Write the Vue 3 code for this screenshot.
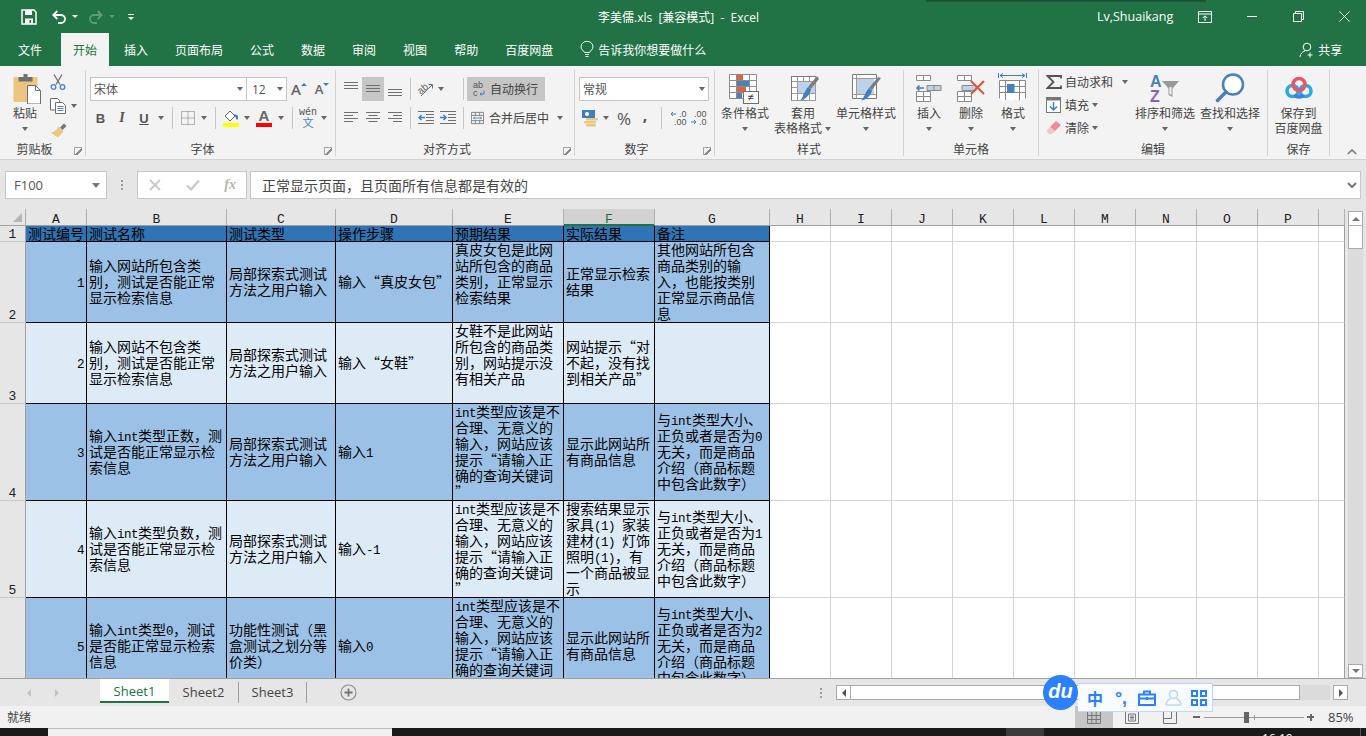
<script setup>
const colLetters = ['A','B','C','D','E','F','G','H','I','J','K','L','M','N','O','P','']
const warn = 'int类型应该是不\n合理、无意义的\n输入，网站应该\n提示“请输入正\n确的查询关键词\n”'
const note = n => `与int类型大小、\n正负或者是否为${n}\n无关，而是商品\n介绍（商品标题\n中包含此数字）`
const method = '局部探索式测试\n方法之用户输入'
const rows = [
  { n: 1, cls: 'head', cells: ['测试编号','测试名称','测试类型','操作步骤','预期结果','实际结果','备注'] },
  { n: 2, cls: 'dark', cells: ['1','输入网站所包含类\n别，测试是否能正常\n显示检索信息',method,'输入“真皮女包”','真皮女包是此网\n站所包含的商品\n类别，正常显示\n检索结果','正常显示检索\n结果','其他网站所包含\n商品类别的输\n入，也能按类别\n正常显示商品信\n息'] },
  { n: 3, cls: 'light', cells: ['2','输入网站不包含类\n别，测试是否能正常\n显示检索信息',method,'输入“女鞋”','女鞋不是此网站\n所包含的商品类\n别，网站提示没\n有相关产品','网站提示“对\n不起，没有找\n到相关产品”',''] },
  { n: 4, cls: 'dark', cells: ['3','输入int类型正数，测\n试是否能正常显示检\n索信息',method,'输入1',warn,'显示此网站所\n有商品信息',note(0)] },
  { n: 5, cls: 'light', cells: ['4','输入int类型负数，测\n试是否能正常显示检\n索信息',method,'输入-1',warn,'搜索结果显示\n家具(1) 家装\n建材(1) 灯饰\n照明(1)，有\n一个商品被显\n示',note(1)] },
  { n: 6, cls: 'dark', cells: ['5','输入int类型0，测试\n是否能正常显示检索\n信息','功能性测试（黑\n盒测试之划分等\n价类）','输入0',warn,'显示此网站所\n有商品信息',note(2)] },
]
const blanks = 10
const docTitle = '李美儒.xls  [兼容模式]  -  Excel'
const segs = text => (text.match(/[A-Za-z0-9\-() ]+|[^A-Za-z0-9\-() ]+/g) || []).map(t => ({ t, lat: /^[A-Za-z0-9\-() ]/.test(t) }))
const isTop = (r, i) => i === 4 || (r.n === 5 && i === 5)
const tabs = ['插入','页面布局','公式','数据','审阅','视图','帮助','百度网盘']
</script>

<template>
  <div class="app">
    <header class="titlebar">
      <div class="qat">
        <svg class="q-save" width="16" height="16" viewBox="0 0 16 16"><path d="M1 1h12l2 2v12H1z" fill="none" stroke="#fff" stroke-width="1.5"/><rect x="4" y="1" width="7" height="5" fill="#fff"/><rect x="4" y="9.5" width="8" height="5.5" fill="#fff"/><rect x="8.5" y="11" width="1.6" height="3" fill="#217346"/></svg>
        <svg class="q-undo" width="16" height="16" viewBox="0 0 16 16"><path d="M2.5 6H10a3.8 3.8 0 0 1 0 8H7M6.3 2L2.3 6l4 4" fill="none" stroke="#fff" stroke-width="1.8"/></svg>
        <i class="caret white"></i>
        <svg class="q-redo" width="16" height="16" viewBox="0 0 16 16"><path d="M13.5 6H6a3.8 3.8 0 0 0 0 8h3M9.7 2l4 4-4 4" fill="none" stroke="#5f9c7e" stroke-width="1.8"/></svg>
        <i class="caret dim"></i>
        <span class="q-more"><b></b><i class="caret white"></i></span>
      </div>
      <div class="doc">{{ docTitle }}</div>
      <div class="user">Lv,Shuaikang</div>
      <svg class="w-disp" width="14" height="12" viewBox="0 0 14 12"><path d="M.5.5h13v11H.5zM.5 3h13M7 10V5M4.8 7L7 4.8 9.2 7" fill="none" stroke="#fff"/></svg>
      <svg class="w-min" width="11" height="11" viewBox="0 0 11 11"><path d="M0 5.5h10" stroke="#fff"/></svg>
      <svg class="w-res" width="11" height="11" viewBox="0 0 11 11"><path d="M.5 2.5h8v8h-8zM2.5 2.5v-2h8v8h-2" fill="none" stroke="#fff"/></svg>
      <svg class="w-close" width="11" height="11" viewBox="0 0 11 11"><path d="M.5.5l10 10M10.5.5l-10 10" stroke="#fff"/></svg>
      <div class="shadow"></div>
    </header>

    <nav class="tabs">
      <span class="tab file">文件</span>
      <span class="tab active">开始</span>
      <span v-for="t in tabs" :key="t" class="tab">{{ t }}</span>
      <svg class="bulb" width="14" height="17" viewBox="0 0 14 17"><path d="M4.5 11.5C3.5 9.5 1 8.500 1 5.800A5.800 5.300 0 0 1 13 5.800c0 2.700-2.500 3.700-3.500 5.700zM5 13.500h4M5.500 15.500h3" fill="none" stroke="#fff"/></svg>
      <span class="tell">告诉我你想要做什么</span>
      <svg class="share-ic" width="16" height="16" viewBox="0 0 16 16"><circle cx="8" cy="5" r="3.800" fill="none" stroke="#fff"/><path d="M1 15c.5-3.500 2.500-5.500 5-6M11 10.500v5M8.500 13h5" fill="none" stroke="#fff"/></svg>
      <span class="share">共享</span>
    </nav>

    <section class="ribbon">
      <!-- 剪贴板 -->
      <div class="group g-clip has-launch">
        <div class="content clip">
          <div class="big b-paste">
            <div class="ic">
              <svg width="30" height="32" viewBox="0 0 30 32"><rect x="1.500" y="5" width="24" height="25" rx="1" fill="#ecc67f"/><path d="M6.500 9.500V5h5V2h4v3h5v4.500z" fill="#6f6f6f"/><path d="M15.500 13.500h8l5 5v13.500h-13z" fill="#fff" stroke="#6f6f6f"/><path d="M23.500 13.500v5h5" fill="none" stroke="#6f6f6f"/></svg>
            </div>
            <span>粘贴</span>
            <i class="caret cl"></i>
          </div>
          <div class="clip-tools">
            <div class="ct">
              <svg width="16" height="16" viewBox="0 0 16 16"><path d="M4 .5l6 10M12 .5l-6 10" stroke="#6f6f6f" stroke-width="1.300" fill="none"/><circle cx="3.500" cy="13" r="2.300" fill="none" stroke="#4b82bd" stroke-width="1.300"/><circle cx="12.500" cy="13" r="2.300" fill="none" stroke="#4b82bd" stroke-width="1.300"/></svg>
            </div>
            <div class="ct">
              <svg width="16" height="16" viewBox="0 0 16 16"><path d="M.5.5h7l2 2V12H.5z" fill="#fff" stroke="#6f6f6f"/><path d="M5.500 4.500h7l3 3v8h-10z" fill="#fff" stroke="#6f6f6f"/><path d="M7.500 8.500h6M7.500 10.500h6M7.500 12.500h6" stroke="#4b82bd"/></svg>
              <i class="caret cc"></i>
            </div>
            <div class="ct">
              <svg width="17" height="15" viewBox="0 0 17 15"><path d="M10 4.500l4-4 2.500 2.500-4 4z" fill="#777"/><path d="M8.500 3.500l5 5-5.500 6-7.500-5c3 0 6-2 8-6z" fill="#ecc67f"/></svg>
            </div>
          </div>
        </div>
        <div class="label">剪贴板</div><i class="launch"></i>
      </div>

      <!-- 字体 -->
      <div class="group g-font has-launch">
        <div class="content rows">
          <div class="font-r1">
            <div class="combo"><span>宋体</span><i class="caret"></i></div>
            <div class="combo"><span>12</span><i class="caret"></i></div>
            <span class="cell-c aa"><span class="aa-t">A</span><i class="tri-up"></i></span>
            <span class="cell-c aa small"><span class="aa-t">A</span><i class="tri-dn"></i></span>
          </div>
          <div class="font-r2">
            <span class="cell-c fb">B</span>
            <span class="cell-c fi">I</span>
            <span class="cell-c fu">U</span>
            <span class="cell-c"><i class="caret"></i></span>
            <span class="cell-c"><i class="sep"></i></span>
            <span class="cell-c"><svg width="14" height="14" viewBox="0 0 14 14"><path d="M.5.500h13v13H.5zM7 .5v13M.5 7h13" fill="none" stroke="#777" stroke-dasharray="1 1"/></svg></span>
            <span class="cell-c"><i class="caret"></i></span>
            <span class="cell-c"><i class="sep"></i></span>
            <span class="cell-c"><svg width="18" height="18" viewBox="0 0 18 18"><path d="M3 7l5-5 5 5-5 5z" fill="#fff" stroke="#666"/><path d="M12 5l4 1.500 0 4-1.500 0z" fill="#4b82bd"/><rect x="1" y="14" width="16" height="4" fill="#ff0"/></svg></span>
            <span class="cell-c"><i class="caret"></i></span>
            <span class="cell-c fa"><span>A</span><i class="bar-red"></i></span>
            <span class="cell-c"><i class="caret"></i></span>
            <span class="cell-c"><i class="sep"></i></span>
            <span class="cell-c wen"><small>wén</small><em>文</em></span>
            <span class="cell-c"><i class="caret"></i></span>
          </div>
        </div>
        <div class="label">字体</div><i class="launch"></i>
      </div>

      <!-- 对齐方式 -->
      <div class="group g-align has-launch">
        <div class="content rows">
          <div class="al-r1">
            <span class="cell-c"><svg width="15" height="16" viewBox="0 0 15 16"><path d="M0 1.500h14M0 4.500h14M0 7.500h14" stroke="#6f6f6f"/></svg></span>
            <span class="cell-c on"><svg width="15" height="16" viewBox="0 0 15 16"><path d="M0 4.500h14M0 7.500h14M0 10.500h14" stroke="#6f6f6f"/></svg></span>
            <span class="cell-c"><svg width="15" height="16" viewBox="0 0 15 16"><path d="M0 8.500h14M0 11.500h14M0 14.500h14" stroke="#6f6f6f"/></svg></span>
            <span class="cell-c"><i class="sep"></i></span>
            <span class="cell-c"><svg width="16" height="16" viewBox="0 0 16 16"><text x="1" y="11" class="ori" transform="rotate(-40 6 9)">ab</text><path d="M4 15L15 4M11.500 3.500h4v4" fill="none" stroke="#6f6f6f"/></svg></span>
            <span class="cell-c"><i class="caret"></i></span>
            <span></span>
            <span class="cell-c"><i class="sep"></i></span>
            <div class="wrap-btn">
              <svg width="13" height="16" viewBox="0 0 13 16"><text x="0" y="7" class="abc">ab</text><text x="0" y="15" class="abc">c</text><path d="M11 9.500V13H7M8.500 11.500L7 13l1.500 1.500" fill="none" stroke="#3f7fc1"/></svg>
              <span>自动换行</span>
            </div>
          </div>
          <div class="al-r2">
            <span class="cell-c"><svg width="15" height="12" viewBox="0 0 15 12"><path d="M0 .5h14M0 3.500h9M0 6.500h14M0 9.500h9" stroke="#6f6f6f"/></svg></span>
            <span class="cell-c"><svg width="15" height="12" viewBox="0 0 15 12"><path d="M0 .5h14M2.500 3.500h9M0 6.500h14M2.500 9.500h9" stroke="#6f6f6f"/></svg></span>
            <span class="cell-c"><svg width="15" height="12" viewBox="0 0 15 12"><path d="M0 .5h14M5 3.500h9M0 6.500h14M5 9.500h9" stroke="#6f6f6f"/></svg></span>
            <span class="cell-c"><i class="sep"></i></span>
            <span class="cell-c"><svg width="16" height="14" viewBox="0 0 16 14"><path d="M0 .5h16M8 3.500h8M8 6.500h8M8 9.500h8M0 12.500h16" stroke="#6f6f6f"/><path d="M7 6.500H1M3.500 4L1 6.500 3.500 9" fill="none" stroke="#3f7fc1" stroke-width="1.500"/></svg></span>
            <span class="cell-c"><svg width="16" height="14" viewBox="0 0 16 14"><path d="M0 .5h16M8 3.500h8M8 6.500h8M8 9.500h8M0 12.500h16" stroke="#6f6f6f"/><path d="M0 6.500h6M3.500 4L6 6.500 3.500 9" fill="none" stroke="#3f7fc1" stroke-width="1.500"/></svg></span>
            <span class="cell-c"><i class="sep"></i></span>
            <div class="merge">
              <svg width="15" height="14" viewBox="0 0 15 14"><path d="M.5.5h14v13H.5zM.5 4h14M.5 10h14M5 .5V4M10 .5V4M5 10v3.500M10 10v3.500" fill="none" stroke="#777"/><path d="M2.500 7h10M4.500 5.500L3 7l1.500 1.500M10.500 5.500L12 7l-1.500 1.500" fill="none" stroke="#3f7fc1"/></svg>
              <span>合并后居中</span>
              <i class="caret cm"></i>
            </div>
          </div>
        </div>
        <div class="label">对齐方式</div><i class="launch"></i>
      </div>

      <!-- 数字 -->
      <div class="group g-num has-launch">
        <div class="content rows">
          <div class="num-r1"><div class="combo"><span>常规</span><i class="caret"></i></div></div>
          <div class="num-r2">
            <span class="cell-c"><svg width="17" height="18" viewBox="0 0 17 18"><rect x="0" y="1" width="13" height="8" fill="#3f7fc1"/><circle cx="5" cy="5" r="2" fill="#fff"/><rect x="4" y="9" width="12" height="2.500" rx="1" fill="#ecc67f"/><rect x="2" y="12" width="12" height="2.500" rx="1" fill="#ecc67f"/><rect x="4" y="15" width="10" height="2.500" rx="1" fill="#ecc67f"/></svg></span>
            <span class="cell-c"><i class="caret"></i></span>
            <span class="cell-c pct">%</span>
            <span class="cell-c comma">,</span>
            <span class="cell-c"><i class="sep"></i></span>
            <span class="cell-c dec"><svg width="16" height="16" viewBox="0 0 16 16"><path d="M0 4h5M2 2L0 4l2 2" fill="none" stroke="#3f7fc1"/><text x="8" y="7" class="d">.0</text><text x="3" y="15" class="d">.00</text></svg></span>
            <span class="cell-c dec"><svg width="16" height="16" viewBox="0 0 16 16"><text x="3" y="7" class="d">.00</text><path d="M0 12h5M3 10l2 2-2 2" fill="none" stroke="#3f7fc1"/><text x="8" y="15" class="d">.0</text></svg></span>
          </div>
        </div>
        <div class="label">数字</div><i class="launch"></i>
      </div>

      <!-- 样式 -->
      <div class="group g-style">
        <div class="content flexrow">
          <div class="big b-cond">
            <div class="ic">
              <svg width="32" height="32" viewBox="0 0 32 32"><path d="M.5 2.500h27v24H.500zM.5 8.500h27M.5 14.500h27M.5 20.500h27M7.500 2.500v24M20.500 2.500v24" fill="#fff" stroke="#8c8c8c"/><rect x="8" y="3" width="6" height="5" fill="#e0623e"/><rect x="8" y="9" width="12" height="5" fill="#4a81ba"/><rect x="8" y="15" width="9" height="5" fill="#e0623e"/><rect x="8" y="21" width="5" height="5" fill="#4a81ba"/><rect x="14.500" y="19.500" width="15" height="12" fill="#fff" stroke="#6f6f6f"/><text x="18.500" y="29" class="ne">≠</text></svg>
            </div>
            <span>条件格式</span>
            <i class="caret cl"></i>
          </div>
          <div class="big b-table">
            <div class="ic">
              <svg width="32" height="32" viewBox="-3 0 32 32"><path d="M1.500 4.500h24v24h-24zM1.500 9.500h24M1.500 15.500h24M1.500 21.500h24M7.500 4.500v24M13.500 4.500v24M19.500 4.500v24" fill="#fff" stroke="#9b9b9b"/><rect x="8" y="10" width="17" height="11" fill="#bdd2e9"/><path d="M1.500 4.500h24M1.500 4.500v24" stroke="#7a7a7a" fill="none"/><path d="M29 7l-8 10-3-2 9-11z" fill="#7d7d7d"/><path d="M18 15l3 2.500c-1 5-5 10-11 11 3-2 4-9 8-13.500z" fill="#3f7fc1"/></svg>
            </div>
            <span>套用</span>
            <span class="inl">表格格式<i class="caret ci"></i></span>
          </div>
          <div class="big b-cstyle">
            <div class="ic">
              <svg width="32" height="32" viewBox="0 0 32 32"><path d="M2.500 2.500h24v24h-24z" fill="#fff" stroke="#7a7a7a"/><rect x="7" y="7" width="17" height="15" fill="#bdd2e9"/><path d="M6.500 2.500v24M2.500 6.500h24M2.500 22.500h24" stroke="#9b9b9b" fill="none"/><path d="M31 6l-9 12-3-2 9-11z" fill="#7d7d7d"/><path d="M19 16l3 2.500c-1 5-5 9-11 10 3-2 4-8 8-12.500z" fill="#3f7fc1"/></svg>
            </div>
            <span>单元格样式</span>
            <i class="caret cl"></i>
          </div>
        </div>
        <div class="label">样式</div>
      </div>

      <!-- 单元格 -->
      <div class="group g-cells">
        <div class="content flexrow">
          <div class="big b-c">
            <div class="ic">
              <svg width="28" height="30" viewBox="0 0 28 30"><path d="M1.500 2.500h14v5h-14zM8.500 2.500v5M1.500 18.500h14v10h-14zM1.500 23.500h14M8.500 18.500v10" fill="#fff" stroke="#8a8a8a"/><path d="M12 12.500h14v5H12zM19 12.500v5" fill="#bdd2e9" stroke="#8a8a8a"/><path d="M9 15H2M4.500 12.500L2 15l2.500 2.500" fill="none" stroke="#3f7fc1" stroke-width="1.500"/></svg>
            </div>
            <span>插入</span>
            <i class="caret cl"></i>
          </div>
          <div class="big b-c">
            <div class="ic">
              <svg width="30" height="30" viewBox="0 0 30 30"><path d="M1.500 2.500h14v5h-14zM8.500 2.500v5M1.500 18.500h14v10h-14zM1.500 23.500h14M8.500 18.500v10" fill="#fff" stroke="#8a8a8a"/><path d="M6 12.500h14v5H6z" fill="#bdd2e9" stroke="#8a8a8a"/><path d="M15 8l13 13M28 8L15 21" stroke="#d9583a" stroke-width="2"/></svg>
            </div>
            <span>删除</span>
            <i class="caret cl"></i>
          </div>
          <div class="big b-c">
            <div class="ic">
              <svg width="30" height="32" viewBox="0 0 30 32"><path d="M.5 1v5M28.500 1v5M2 3.500h25M5 1.500L2 3.500l3 2M24 1.500l3 2-3 2" fill="none" stroke="#3f7fc1"/><path d="M1.500 8.500h26v21h-26zM1.500 14.500h26M1.500 20.500h26M7.500 8.500v21M21.500 8.500v21" fill="#fff" stroke="#8a8a8a"/><rect x="9" y="12" width="7.500" height="9" fill="#4a81ba"/><path d="M1 26c3 3 6 3 8 1 2 2 6 2 8 0 2 2 7 2 11-1v6H1z" fill="#f3f3f3"/></svg>
            </div>
            <span>格式</span>
            <i class="caret cl"></i>
          </div>
        </div>
        <div class="label">单元格</div>
      </div>

      <!-- 编辑 -->
      <div class="group g-edit">
        <div class="content flexrow">
          <div class="edit-col">
            <div class="er">
              <span class="er-ic"><svg width="16" height="14" viewBox="0 0 16 14"><path d="M15 3.500V1H1.500l6 6-6 6H15v-2.500" fill="none" stroke="#555" stroke-width="1.800"/></svg></span>
              <span>自动求和</span><i class="caret c1"></i>
            </div>
            <div class="er">
              <span class="er-ic"><svg width="15" height="16" viewBox="0 0 15 16"><rect x=".5" y=".5" width="14" height="15" fill="#fff" stroke="#777"/><rect x=".5" y=".5" width="14" height="3" fill="#777"/><path d="M7.500 5v8M4 9.500L7.500 13 11 9.500" fill="none" stroke="#3f7fc1" stroke-width="1.500"/></svg></span>
              <span>填充</span><i class="caret c2"></i>
            </div>
            <div class="er">
              <span class="er-ic"><svg width="16" height="15" viewBox="0 0 16 15"><path d="M10 1l5 4-6 6-5-4z" fill="#ee8a9b"/><path d="M4 7l5 4-3 3H3L0.500 11z" fill="#f5c2cb"/></svg></span>
              <span>清除</span><i class="caret c2"></i>
            </div>
          </div>
          <div class="big b-sort">
            <div class="ic">
              <svg width="32" height="32" viewBox="0 0 32 32"><text x="1" y="15" class="az a">A</text><text x="1" y="30" class="az z">Z</text><path d="M13 9h17l-6.500 7.500V25l-4-2v-6.500z" fill="#9a9a9a"/><path d="M20.500 15v7l2 1v-8" fill="#f3f3f3"/></svg>
            </div>
            <span>排序和筛选</span>
            <i class="caret cl"></i>
          </div>
          <div class="big b-find">
            <div class="ic">
              <svg width="32" height="32" viewBox="0 0 32 32"><circle cx="19" cy="12.500" r="10" fill="#fff" stroke="#4a81ba" stroke-width="2.500"/><path d="M12 20L3.500 28.500" stroke="#4a81ba" stroke-width="3.500" stroke-linecap="round"/></svg>
            </div>
            <span>查找和选择</span>
            <i class="caret cl"></i>
          </div>
        </div>
        <div class="label">编辑</div>
      </div>

      <!-- 保存 -->
      <div class="group g-save">
        <div class="content flexrow">
          <div class="big b-bd">
            <div class="ic">
              <svg width="28" height="26" viewBox="0 0 28 26"><circle cx="7.500" cy="16" r="5.500" fill="none" stroke="#29a9e8" stroke-width="3.500"/><circle cx="20.500" cy="16" r="5.500" fill="none" stroke="#29a9e8" stroke-width="3.500"/><circle cx="14" cy="9.500" r="6" fill="none" stroke="#ef5365" stroke-width="3.500"/><path d="M9.500 20a6 6 0 0 0 9 0" fill="none" stroke="#3f7fe0" stroke-width="3.500"/></svg>
            </div>
            <span>保存到</span>
            <span>百度网盘</span>
          </div>
        </div>
        <div class="label">保存</div>
      </div>

      <svg class="collapse" width="10" height="6" viewBox="0 0 10 6"><path d="M.8 5L5 1l4.200 4" fill="none" stroke="#777" stroke-width="1.600"/></svg>
    </section>

    <section class="formula">
      <div class="namebox"><span>F100</span><i class="caret big-caret"></i></div>
      <div class="dots"><b></b><b></b><b></b></div>
      <div class="fx-box">
        <svg width="12" height="12" viewBox="0 0 12 12"><path d="M1 1l10 10M11 1L1 11" stroke="#c9c9c9" stroke-width="1.800"/></svg>
        <svg width="14" height="12" viewBox="0 0 14 12"><path d="M1 6.500L5 10.500 13 1.500" fill="none" stroke="#c9c9c9" stroke-width="2.200"/></svg>
        <span class="fx">fx</span>
      </div>
      <div class="fx-input"><span>正常显示页面，且页面所有信息都是有效的</span>
        <svg width="10" height="7" viewBox="0 0 10 7"><path d="M1 1l4 4 4-4" fill="none" stroke="#777" stroke-width="2"/></svg>
      </div>
    </section>

    <section class="sheet-wrap">
      <div class="sheet">
        <div class="corner"><i></i></div>
        <div v-for="c in colLetters" :key="c" class="colh" :class="{ sel: c === 'F' }">{{ c }}</div>
        <template v-for="r in rows" :key="r.n">
          <div class="rowh">{{ r.n }}</div>
          <div v-for="(txt, i) in r.cells" :key="i" class="cell" :class="[r.cls, { num: i === 0 && r.n > 1, top: isTop(r, i) }]"><span class="t"><span v-for="(s, k) in segs(txt)" :key="k" :class="{ lat: s.lat }">{{ s.t }}</span></span></div>
          <div v-for="b in blanks" :key="'b' + b" class="blank" :class="{ last: b === blanks }"></div>
        </template>
      </div>
      <div class="vscroll">
        <div class="vbtn"><i class="tri-up g"></i></div>
        <div class="vthumb"></div>
        <div class="vtrack"></div>
        <div class="vbtn down"><i class="tri-dn2"></i></div>
      </div>
    </section>

    <section class="sheettabs">
      <div class="nav"><i class="arr-l"></i><i class="arr-r"></i></div>
      <div class="stab act">Sheet1</div>
      <div class="stab s2">Sheet2</div>
      <div class="stab s3">Sheet3</div>
      <svg class="plus" width="17" height="17" viewBox="0 0 17 17"><circle cx="8.500" cy="8.500" r="7.500" fill="none" stroke="#8e8e8e" stroke-width="1.200"/><path d="M8.500 4.500v8M4.500 8.500h8" stroke="#777" stroke-width="1.800"/></svg>
      <div class="hs-dots"><b></b><b></b><b></b></div>
      <div class="hscroll">
        <div class="hbtn"><i class="arr-l d"></i></div>
        <div class="hthumb"></div>
        <div class="htrack"></div>
        <div class="hbtn last"><i class="arr-r d"></i></div>
      </div>
    </section>

    <footer class="status">
      <span class="ready">就绪</span>
      <div class="views">
        <span class="view on"><svg width="14" height="13" viewBox="0 0 14 13"><path d="M.5.500h13v12H.500zM.5 4.500h13M.5 8.500h13M4.800.5v12M9.200.5v12" fill="none" stroke="#777"/></svg></span>
        <span class="view"><svg width="14" height="13" viewBox="0 0 14 13"><path d="M.5.500h13v12H.500z" fill="none" stroke="#777"/><path d="M3.500 3h7v7h-7zM5 5h4M5 6.500h4M5 8h4" fill="none" stroke="#777"/></svg></span>
        <span class="view"><svg width="14" height="13" viewBox="0 0 14 13"><path d="M.5.500h13v12H.500zM.5 7.500h8V.5" fill="none" stroke="#777"/></svg></span>
      </div>
      <i class="z-minus"></i>
      <div class="z-track"><i class="z-thumb"></i><i class="z-tick"></i></div>
      <span class="z-plus"></span>
      <span class="zoom">85%</span>
    </footer>

    <div class="taskbar">
      <i class="tk a"></i><i class="tk b"></i><i class="tk c"></i><i class="tk d"></i><span class="clock">16:19</span><i class="tk e"></i>
    </div>

    <div class="du">
      <div class="du-logo">du</div>
      <div class="du-bar">
        <span class="du-i du-zh">中</span>
        <span class="du-i du-p">°,</span>
        <span class="du-i"><svg width="18" height="16" viewBox="0 0 18 16"><path d="M1 4.500h16V15H1zM6 4.500V1.500h6v3M1 8.500h16M9 7v3" fill="none" stroke="#2b80ff" stroke-width="2"/></svg></span>
        <span class="du-i"><svg width="17" height="17" viewBox="0 0 17 17"><circle cx="8.500" cy="5.500" r="4" fill="none" stroke="#bcd7fb" stroke-width="1.600"/><path d="M1 16c0-4 3-5.500 4.500-6.500M16 16c0-4-3-5.500-4.500-6.500M1 16h15" fill="none" stroke="#bcd7fb" stroke-width="1.600"/></svg></span>
        <span class="du-i"><svg width="16" height="16" viewBox="0 0 16 16"><path d="M1 1h5v5H1zM10 1h5v5h-5zM1 10h5v5H1zM10 10h5v5h-5z" fill="none" stroke="#2b80ff" stroke-width="2"/></svg></span>
      </div>
    </div>
  </div>
</template>

<style scoped>
.app { position: relative; width: 1366px; height: 736px; overflow: hidden; display: flex; flex-direction: column; background: #e6e6e6; font-family: "Open Sans", "Noto Sans CJK SC", sans-serif; font-size: 12px; color: #444; }
i { display: block; font-style: normal; }

.caret { width: 0; height: 0; border-left: 3.5px solid transparent; border-right: 3.5px solid transparent; border-top: 4px solid #666; flex: none; }
.caret.white { border-top-color: #fff; border-left-width: 3px; border-right-width: 3px; border-top-width: 3px; }
.caret.dim { border-top-color: #5f9c7e; border-left-width: 3px; border-right-width: 3px; border-top-width: 3px; }

/* title bar */
.titlebar { position: relative; height: 33px; background: #217346; display: flex; align-items: center; color: #fff; flex: none; }
.qat { width: 598px; padding-left: 21px; box-sizing: border-box; display: flex; align-items: center; flex: none; height: 33px; }
.q-undo { margin-left: 14px; }
.qat .caret.white { margin-left: 5px; }
.q-redo { margin-left: 10px; }
.caret.dim { margin-left: 5px; }
.q-more { margin-left: 13px; display: flex; flex-direction: column; align-items: center; gap: 2px; }
.q-more b { display: block; width: 6px; height: 1px; background: #fff; }
.q-more .caret.white { margin-left: 0; }
.doc { width: 499px; white-space: pre; flex: none; font-size: 12px; color: #fff; }
.user { width: 101px; flex: none; font-size: 12.500px; color: #fff; }
.w-min { margin-left: 35px; }
.w-disp { flex: none; }
.w-res { margin-left: 35px; }
.w-close { margin-left: 35px; }
.shadow { position: absolute; left: 926px; top: 0; width: 280px; height: 3px; background: linear-gradient(#14482c, #217346); }

/* ribbon tabs */
.tabs { height: 33px; background: #217346; display: flex; align-items: center; gap: 3px; color: #fff; padding-left: 6px; flex: none; }
.tab { height: 33px; line-height: 35px; padding: 0 12px; }
.tab.file { margin-right: 4px; }
.tab.active { background: #f3f3f3; color: #217346; }
.bulb { margin-left: 12px; }
.tell { margin-left: 1px; }
.share-ic { margin-left: 590px; }
.share { margin-left: 0; }

/* ribbon */
.ribbon { height: 94px; box-sizing: border-box; background: #f3f3f3; border-bottom: 1px solid #d2d2d2; padding-top: 4px; display: flex; flex: none; }
.group { position: relative; height: 86px; box-sizing: border-box; border-right: 1px solid #d2d2d2; display: grid; grid-template-rows: 72px 14px; flex: none; }
.label { text-align: center; line-height: 16px; height: 14px; color: #444; }
.has-launch .label { padding-right: 16px; }
.launch { position: absolute; right: 3px; bottom: 1px; width: 8px; height: 8px; border-left: 1px solid #a5a5a5; border-bottom: 0; background: linear-gradient(135deg, transparent 45%, #8a8a8a 45%, #8a8a8a 70%, transparent 70%); border-top: 1px solid #a5a5a5; box-sizing: border-box; }
.g-clip { width: 86px; }
.g-font { width: 250px; }
.g-align { width: 239px; }
.g-num { width: 140px; }
.g-style { width: 189px; }
.g-cells { width: 135px; }
.g-edit { width: 229px; }
.g-save { width: 62px; }
.collapse { margin: 79px 0 0 17px; flex: none; }

.content { min-width: 0; }
.flexrow { display: flex; }
.big { display: flex; flex-direction: column; align-items: center; line-height: 15px; flex: none; white-space: nowrap; color: #444; }
.big .ic { height: 36px; display: flex; align-items: center; justify-content: center; }
.caret.cl { margin-top: 6px; }
.b-paste { width: 50px; }
.b-paste .ic { height: 36px; padding-left: 3px; }
.clip { display: flex; }
.clip-tools { display: flex; flex-direction: column; padding-top: 0; }
.ct { height: 24px; display: flex; align-items: center; }
.cc { margin-left: 5px; }

.rows { display: flex; flex-direction: column; padding-top: 7px; }
.cell-c { display: flex; align-items: center; justify-content: center; height: 24px; }
.sep { width: 1px; height: 22px; background: #c6c6c6; }
.combo { height: 24px; box-sizing: border-box; background: #fff; border: 1px solid #c6c6c6; display: flex; align-items: center; justify-content: space-between; padding: 0 3px 0 3px; color: #555; }
.g-font .rows { padding-left: 4px; }
.font-r1 { display: grid; grid-template-columns: 157px 40px 24px 22px; height: 24px; }
.font-r1 .combo + .combo { margin-left: -1px; padding-left: 5px; }
.aa { position: relative; font-size: 15px; color: #666; }
.aa-t { font-family: "Open Sans", sans-serif; font-weight: 600; }
.aa.small { font-size: 13px; }
.tri-up { width: 0; height: 0; border-left: 3px solid transparent; border-right: 3px solid transparent; border-bottom: 3px solid #3f7fc1; margin: -10px 0 0 0; }
.tri-dn { width: 0; height: 0; border-left: 3px solid transparent; border-right: 3px solid transparent; border-top: 3px solid #3f7fc1; margin: -10px 0 0 0; }
.font-r2 { display: grid; grid-template-columns: 21px 22px 22px 12px 10px 21px 12px 10px 22px 10px 24px 10px 12px 20px 12px; margin-top: 5px; height: 24px; }
.fb, .fi, .fu { font-family: "Liberation Sans", sans-serif; font-size: 13px; color: #555; }
.fb { font-weight: bold; }
.fi { font-style: italic; font-weight: bold; font-family: "Liberation Serif", serif; font-size: 14px; }
.fu { text-decoration: underline; font-weight: bold; }
.fa { position: relative; flex-direction: column; font-size: 15px; font-weight: bold; color: #666; line-height: 13px; font-family: "Liberation Sans", sans-serif; }
.bar-red { width: 16px; height: 4px; background: #f00; margin-top: 1px; }
.wen { flex-direction: column; line-height: 10px; color: #555; }
.wen small { font-size: 10px; font-family: "Liberation Mono", monospace; }
.wen em { font-style: normal; font-size: 11px; color: #3f7fc1; }

.g-align .rows { padding-left: 4px; }
.al-r1 { display: grid; grid-template-columns: 22px 22px 22px 8px 22px 10px 13px 8px 78px; height: 24px; }
.al-r2 { display: grid; grid-template-columns: 22px 22px 22px 8px 23px 22px 8px 96px; margin-top: 5px; height: 24px; }
.on { background: #c6c6c6; }
.ori { font-size: 10px; fill: #666; font-family: "Liberation Sans", sans-serif; }
.wrap-btn { background: #c6c6c6; display: flex; align-items: center; height: 24px; padding-left: 6px; gap: 4px; white-space: nowrap; }
.abc { font-size: 9px; fill: #555; font-family: "Liberation Sans", sans-serif; }
.merge { display: flex; align-items: center; height: 24px; padding-left: 4px; white-space: nowrap; }
.merge span { margin-left: 5px; }
.cm { margin-left: 8px; }

.g-num .rows { padding-left: 4px; }
.num-r1 { width: 130px; }
.num-r2 { display: grid; grid-template-columns: 22px 10px 26px 16px 16px 20px 20px; margin-top: 5px; height: 24px; }
.pct { font-size: 17px; color: #555; }
.comma { font-size: 16px; font-weight: bold; color: #555; padding-bottom: 6px; box-sizing: border-box; }
.d { font-size: 9px; fill: #555; font-family: "Liberation Sans", sans-serif; }
.ne { font-size: 11px; fill: #333; font-family: "Liberation Sans", sans-serif; }
.b-cond { width: 60px; }
.b-table { width: 56px; }
.b-cstyle { width: 70px; }
.inl { display: flex; align-items: center; position: relative; margin-right: 10px; }
.ci { position: absolute; left: 51px; top: 6px; }
.g-cells .content { padding-left: 4px; }
.b-c { width: 42px; }

.edit-col { width: 96px; flex: none; display: flex; flex-direction: column; }
.er { height: 23px; display: flex; align-items: center; padding-left: 7px; }
.er-ic { width: 19px; display: flex; }
.c1 { margin-left: 9px; }
.c2 { margin-left: 3px; }
.b-sort { width: 60px; }
.b-find { width: 60px; margin-left: 5px; }
.az { font-size: 16px; font-weight: bold; font-family: "Liberation Sans", sans-serif; }
.a { fill: #4a81ba; }
.z { fill: #8d5fb3; }
.b-bd { width: 61px; }

/* formula bar */
.formula { height: 49px; flex: none; background: #e6e6e6; display: flex; align-items: flex-start; padding-top: 11px; box-sizing: border-box; }
.namebox { margin-left: 5px; width: 102px; height: 28px; box-sizing: border-box; background: #fff; border: 1px solid #c6c6c6; display: flex; align-items: center; justify-content: space-between; padding: 0 6px 0 8px; font-size: 13px; color: #555; }
.big-caret { border-left-width: 4px; border-right-width: 4px; border-top-width: 5px; border-top-color: #777; }
.dots { width: 30px; height: 28px; display: flex; flex-direction: column; align-items: center; justify-content: center; gap: 2px; }
.dots b, .hs-dots b { display: block; width: 2px; height: 2px; background: #9a9a9a; }
.fx-box { width: 110px; height: 28px; box-sizing: border-box; background: #fff; border: 1px solid #c6c6c6; display: flex; align-items: center; justify-content: space-between; padding: 0 10px 0 11px; }
.fx { font-family: "Liberation Serif", serif; font-style: italic; color: #b5b5b5; font-size: 14px; font-weight: bold; }
.fx-input { margin-left: 3px; width: 1111px; height: 28px; box-sizing: border-box; background: #fff; border: 1px solid #c6c6c6; display: flex; align-items: center; justify-content: space-between; padding: 0 3px 0 11px; font-size: 14px; color: #444; }

/* sheet */
.sheet-wrap { height: 469px; flex: none; display: flex; }
.sheet { width: 1345px; height: 469px; overflow: hidden; background: #fff; display: grid; align-content: start; grid-template-columns: 26px 61px 140px 109px 117px 111px 91px 115px repeat(9, 61px) 26px; grid-template-rows: 17px 16px 81px 81px 97px 97px 97px; }
.corner { background: #e6e6e6; border-right: 1px solid #b0b0b0; border-bottom: 1px solid #9f9f9f; position: relative; box-sizing: border-box; }
.corner i { position: absolute; right: 3px; bottom: 3px; width: 0; height: 0; border-left: 9px solid transparent; border-bottom: 9px solid #b5b5b5; }
.colh { background: #e6e6e6; border-right: 1px solid #b0b0b0; border-bottom: 1px solid #9f9f9f; box-sizing: border-box; text-align: center; font: 13px/22px "Liberation Mono", monospace; color: #222; overflow: hidden; }
.colh.sel { background: #d2d2d2; color: #1e6b41; border-bottom: 2px solid #217346; }
.rowh { background: #e6e6e6; border-right: 1px solid #9f9f9f; border-bottom: 1px solid #c9c9c9; box-sizing: border-box; font: 13px/12px "Liberation Mono", monospace; color: #222; display: flex; align-items: flex-end; justify-content: center; }
.cell { box-sizing: border-box; border-right: 1px solid #000; border-bottom: 1px solid #000; display: flex; align-items: center; padding: 0 2px; overflow: hidden; font: 14px/16px "Noto Sans CJK SC", sans-serif; color: #000; min-width: 0; }
.t { display: block; white-space: pre-line; margin-bottom: 2px; }
.lat { font-family: "Liberation Mono", monospace; font-size: 12.500px; letter-spacing: -0.500px; line-height: 0; }
.cell.top { align-items: flex-start; }
.cell.top .t { margin: -1px 0 0; }
.cell.head { background: #2f75b5; align-items: flex-start; white-space: nowrap; }
.cell.head .t { margin: -1px 0 0; white-space: nowrap; }
.cell.dark { background: #9bc2e6; }
.cell.light { background: #ddebf7; }
.cell.num { justify-content: flex-end; padding-right: 2px; }
.blank { box-sizing: border-box; border-right: 1px solid #d4d4d4; border-bottom: 1px solid #d4d4d4; }
.blank.last { border-right-color: #9f9f9f; }

.vscroll { width: 21px; box-sizing: border-box; padding: 2px 3px 0; display: flex; flex-direction: column; flex: none; background: #e6e6e6; }
.vbtn { height: 15px; box-sizing: border-box; background: #fff; border: 1px solid #ababab; display: flex; align-items: center; justify-content: center; }
.vthumb { height: 23px; box-sizing: border-box; background: #fff; border: 1px solid #ababab; border-top: 0; }
.vtrack { flex: 1; background: #dbdbdb; }
.vbtn.down { height: 14px; }
.tri-up.g { border-left-width: 4px; border-right-width: 4px; border-bottom: 4px solid #777; margin: 0; }
.tri-dn2 { width: 0; height: 0; border-left: 4px solid transparent; border-right: 4px solid transparent; border-top: 4px solid #777; }

/* sheet tabs */
.sheettabs { height: 29px; box-sizing: border-box; flex: none; background: #e6e6e6; border-top: 1px solid #9f9f9f; border-bottom: 1px solid #c6c6c6; display: flex; align-items: flex-start; position: relative; }
.nav { width: 100px; height: 27px; display: flex; align-items: center; padding-left: 27px; gap: 24px; box-sizing: border-box; }
.arr-l { width: 0; height: 0; border-top: 4px solid transparent; border-bottom: 4px solid transparent; border-right: 4px solid #c2c2c2; }
.arr-r { width: 0; height: 0; border-top: 4px solid transparent; border-bottom: 4px solid transparent; border-left: 4px solid #c2c2c2; }
.arr-l.d { border-right-color: #555; }
.arr-r.d { border-left-color: #555; }
.stab { height: 21px; box-sizing: border-box; line-height: 21px; text-align: center; font-size: 13px; color: #444; border-right: 1px solid #9f9f9f; margin-top: 3px; flex: none; }
.stab.s2 { width: 70px; }
.stab.s3 { width: 68px; }
.stab.act { width: 69px; height: 24px; margin-top: 0; background: #fff; color: #217346; border-right: 0; border-bottom: 2px solid #217346; line-height: 24px; }
.plus { margin: 5px 0 0 33px; flex: none; }
.hs-dots { margin-left: 463px; height: 27px; display: flex; flex-direction: column; justify-content: center; gap: 2px; }
.hscroll { margin: 6px 0 0 14px; width: 511px; height: 15px; display: flex; flex: none; }
.hbtn { width: 15px; height: 15px; box-sizing: border-box; background: #fff; border: 1px solid #ababab; display: flex; align-items: center; justify-content: center; flex: none; }
.hthumb { width: 449px; height: 15px; box-sizing: border-box; background: #fff; border: 1px solid #ababab; border-left: 0; flex: none; }
.htrack { width: 30px; background: #dbdbdb; flex: none; }
.hbtn.last { margin-left: 3px; }

/* status */
.status { height: 22px; flex: none; background: #f1f1f1; display: flex; align-items: center; position: relative; margin-top: -1px; }
.ready { margin-left: 7px; width: 1068px; flex: none; color: #444; }
.views { display: flex; height: 22px; flex: none; }
.view { width: 38px; display: flex; align-items: center; justify-content: center; }
.view.on { background: #c6c6c6; }
.z-minus { width: 7px; height: 2px; background: #666; margin-left: 4px; flex: none; }
.z-track { position: relative; width: 100px; height: 1px; background: #9a9a9a; margin-left: 4px; flex: none; }
.z-thumb { position: absolute; left: 40px; top: -5px; width: 5px; height: 11px; background: #666; }
.z-tick { position: absolute; left: 50px; top: -2px; width: 1px; height: 5px; background: #9a9a9a; }
.z-plus { position: relative; width: 7px; height: 7px; margin-left: 3px; flex: none; background: linear-gradient(#666, #666) center / 7px 2px no-repeat, linear-gradient(#666, #666) center / 2px 7px no-repeat; }
.zoom { margin-left: 14px; font-size: 13px; color: #444; }

/* taskbar */
.taskbar { height: 8px; flex: none; display: flex; background: #1a1a1a; overflow: hidden; margin-top: 0; }
.tk { height: 8px; flex: none; }
.tk.a { width: 48px; }
.tk.b { width: 344px; background: #f0f0f0; border-top: 1px solid #bdbdbd; box-sizing: border-box; }
.tk.c { width: 614px; }
.tk.d { width: 38px; background: #3b3b3b; }
.clock { margin-left: 218px; width: 60px; flex: none; color: #fff; font-size: 12px; line-height: 15px; padding-top: 3px; }
.tk.e { width: 1px; margin-left: 38px; background: #555; }

/* baidu IME */
.du { position: absolute; left: 1043px; top: 673px; display: flex; align-items: center; }
.du-logo { width: 35px; height: 35px; border-radius: 50%; background: #2b80ff; color: #fff; font: italic bold 20px/33px "Liberation Sans", sans-serif; text-align: center; position: relative; z-index: 1; }
.du-bar { margin-left: 0; margin-top: 10px; width: 135px; height: 29px; box-sizing: border-box; background: #f8fbff; border: 1px solid #bcd7fb; border-left: 0; display: flex; align-items: center; padding-left: 4px; }
.du-i { width: 26px; display: flex; align-items: center; justify-content: center; flex: none; }
.du-zh { color: #2b80ff; font-size: 16px; font-weight: bold; font-family: "Noto Sans CJK SC", sans-serif; }
.du-p { color: #2b80ff; font-size: 18px; font-weight: bold; line-height: 18px; font-family: "Liberation Sans", sans-serif; }
</style>
<style>
html, body { margin: 0; padding: 0; overflow: hidden; background: #e6e6e6; }
</style>
